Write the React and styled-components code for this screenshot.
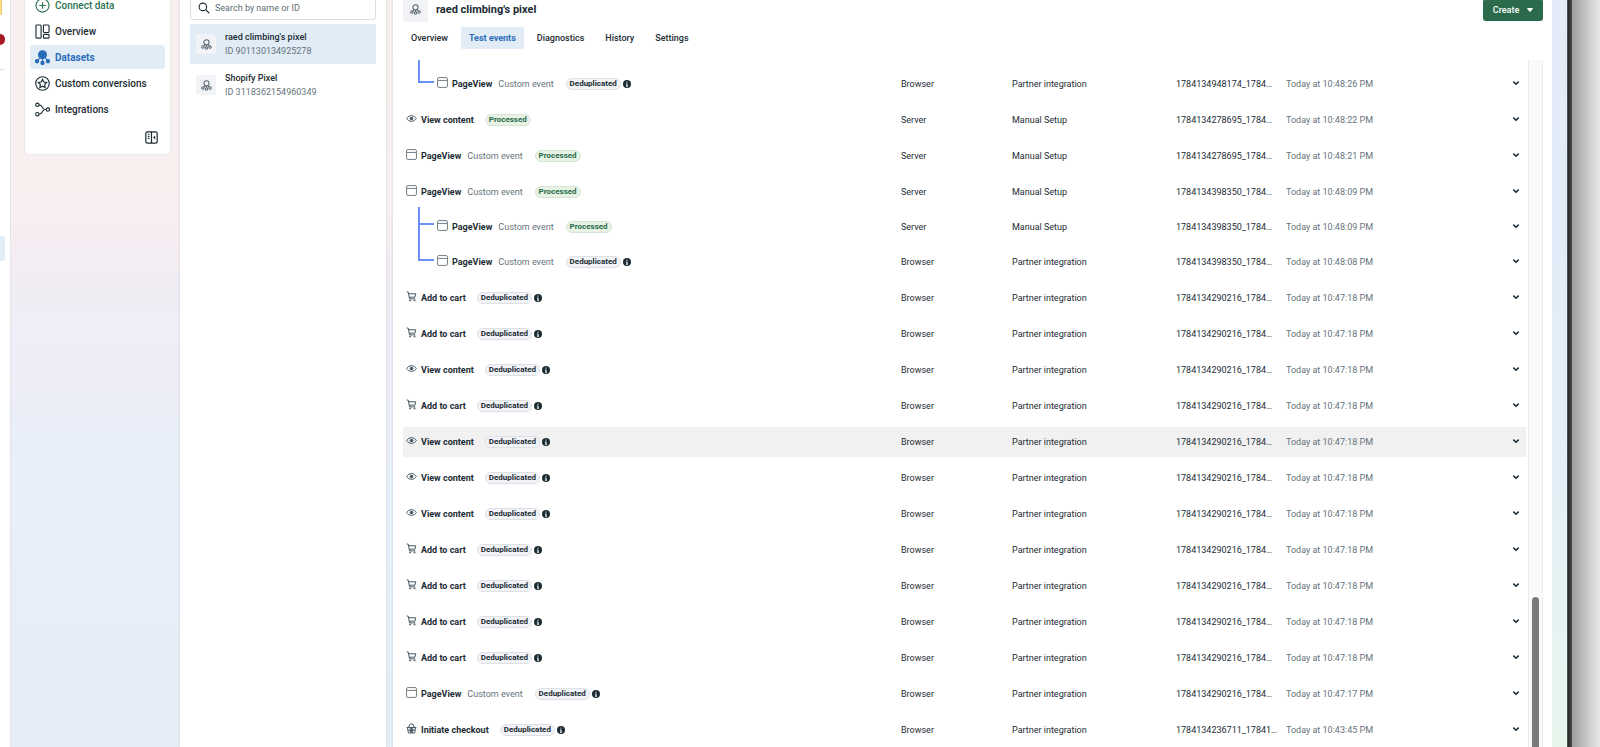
import React from "react";
import styled, { createGlobalStyle, css } from "styled-components";

const navItems = [
  { label: "Connect data", icon: "plus", accent: true },
  { label: "Overview", icon: "overview" },
  { label: "Datasets", icon: "datasets", active: true },
  { label: "Custom conversions", icon: "star" },
  { label: "Integrations", icon: "integrations" },
];

const datasets = [
  { name: "raed climbing's pixel", id: "901130134925278", active: true },
  { name: "Shopify Pixel", id: "3118362154960349" },
];

const tabs = ["Overview", "Test events", "Diagnostics", "History", "Settings"];

const page = { name: "PageView", icon: "window", custom: true };
const view = { name: "View content", icon: "eye" };
const cart = { name: "Add to cart", icon: "cart" };
const checkout = { name: "Initiate checkout", icon: "basket" };
const server = { source: "Server", setup: "Manual Setup", processed: true };
const browser = { source: "Browser", setup: "Partner integration" };
const batch = { ...browser, id: "1784134290216_1784…", time: "10:47:18 PM" };

const events = [
  { ...page, ...browser, id: "1784134948174_1784…", time: "10:48:26 PM", nested: "last" },
  { ...view, ...server, id: "1784134278695_1784…", time: "10:48:22 PM" },
  { ...page, ...server, id: "1784134278695_1784…", time: "10:48:21 PM" },
  { ...page, ...server, id: "1784134398350_1784…", time: "10:48:09 PM" },
  { ...page, ...server, id: "1784134398350_1784…", time: "10:48:09 PM", nested: "first" },
  { ...page, ...browser, id: "1784134398350_1784…", time: "10:48:08 PM", nested: "last" },
  { ...cart, ...batch },
  { ...cart, ...batch },
  { ...view, ...batch },
  { ...cart, ...batch },
  { ...view, ...batch, highlighted: true },
  { ...view, ...batch },
  { ...view, ...batch },
  { ...cart, ...batch },
  { ...cart, ...batch },
  { ...cart, ...batch },
  { ...cart, ...batch },
  { ...page, ...batch, time: "10:47:17 PM" },
  { ...checkout, ...browser, id: "1784134236711_17841…", time: "10:43:45 PM" },
];

const shapes = {
  plus: (
    <>
      <circle cx="8" cy="8" r="7" />
      <path d="M8 4.5v7M4.5 8h7" />
    </>
  ),
  overview: (
    <>
      <rect x="1" y="1" width="5.5" height="14" rx="1" />
      <rect x="9" y="1" width="6" height="8" rx="1" />
      <rect x="9" y="11" width="6" height="4" rx="1" />
    </>
  ),
  datasets: (
    <g fill="currentColor">
      <circle cx="8" cy="5" r="4.2" />
      <circle cx="2.2" cy="12" r="1.7" />
      <circle cx="8" cy="13.8" r="1.7" />
      <circle cx="13.8" cy="12" r="1.7" />
      <path d="M5.5 8 2.5 11.5M8 9v4M10.5 8l3 3.5" />
    </g>
  ),
  star: (
    <>
      <circle cx="8" cy="8" r="7.2" />
      <path d="m8 3.6 1.4 2.8 3.1.5-2.2 2.2.5 3.1L8 10.8l-2.8 1.4.5-3.1-2.2-2.2 3.1-.5z" />
    </>
  ),
  integrations: (
    <>
      <circle cx="2.5" cy="3" r="1.8" />
      <circle cx="2.5" cy="13" r="1.8" />
      <circle cx="13.7" cy="8" r="1.8" />
      <path d="M4.3 3c4 0 3.5 5 6 5h1.6M4.3 13c4 0 3.5-5 6-5" />
    </>
  ),
  collapse: (
    <>
      <rect x="1" y="1" width="14" height="14" rx="2" />
      <path d="M8 1v14M3.5 4h2M3.5 6.5h2M3.5 9h2" />
      <path d="M12.5 5.5v5L10 8z" fill="currentColor" stroke="none" />
    </>
  ),
  search: (
    <>
      <circle cx="6.5" cy="6.5" r="5" />
      <path d="m10.3 10.3 4.7 4.7" />
    </>
  ),
  pixel: (
    <>
      <circle cx="8" cy="4.8" r="3.8" />
      <circle cx="2.8" cy="11.5" r="1.8" />
      <circle cx="8" cy="13" r="1.8" />
      <circle cx="13.2" cy="11.5" r="1.8" />
      <path d="M6 8.2 4.2 10.2M8 8.6v2.6M10 8.2l1.8 2" />
    </>
  ),
  window: (
    <>
      <rect x="0.8" y="0.8" width="14.4" height="14.4" rx="2" />
      <path d="M1 5h14" />
    </>
  ),
  eye: (
    <>
      <path d="M1 8c3.5-5.6 10.5-5.6 14 0-3.5 5.6-10.5 5.6-14 0z" />
      <circle cx="8" cy="8" r="2" fill="currentColor" />
    </>
  ),
  cart: (
    <>
      <path d="M1 1.5h2.2l2 10h8.5M3.7 4h10.5l-1.200 5H4.8" />
      <circle cx="6" cy="13.800" r="0.800" />
      <circle cx="12.5" cy="13.800" r="0.800" />
    </>
  ),
  basket: (
    <path d="M1 6.5h14M2 6.5l1.5 8h9l1.5-8M3.5 6.5 6 1.5h4l2.5 5M6 7l.5 7M10 7l-.5 7M2.8 10.5h10.4M8 7v7" />
  ),
};

function Icon({ name, size, weight = 1.5 }) {
  return (
    <Glyph $size={size} $weight={weight} viewBox="0 0 16 16" aria-hidden="true">
      {shapes[name]}
    </Glyph>
  );
}

function EventRow({ event }) {
  return (
    <Row $nested={event.nested} $highlighted={event.highlighted}>
      <NameCell $nested={event.nested}>
        <EventName>
          <EventIcon $light={event.icon === "window"}>
            <Icon name={event.icon} size={11} weight={1.4} />
          </EventIcon>
          <strong>{event.name}</strong>
          {event.custom && <Muted>Custom event</Muted>}
          <Status $processed={event.processed}>
            {event.processed ? "Processed" : "Deduplicated"}
          </Status>
          {!event.processed && (
            <Info viewBox="0 0 8 8" role="img" aria-label="Info">
              <circle cx="4" cy="4" r="4" fill="#1c2b33" />
              <path d="M4 1.6v1M3.2 3.8H4v2.2M3 6.2h2" stroke="#ffffff" strokeWidth="1" fill="none" />
            </Info>
          )}
        </EventName>
      </NameCell>
      <Cell>{event.source}</Cell>
      <Cell>{event.setup}</Cell>
      <Cell>{event.id}</Cell>
      <Cell>
        <Muted>Today at {event.time}</Muted>
      </Cell>
      <Cell>
        <Expand type="button" aria-label="Show details">
          <svg width="8" height="8" viewBox="0 0 8 8" fill="none" stroke="#1c2b33" strokeWidth="1.5">
            <path d="m1.3 2.6 2.7 2.6 2.7-2.6" />
          </svg>
        </Expand>
      </Cell>
    </Row>
  );
}

function App() {
  return (
    <Screen>
      <GlobalStyle />
      <Rail>
        <RailAvatar />
        <RailBadge />
        <RailDivider />
        <RailSelected />
      </Rail>
      <Sidebar>
        <NavCard>
          {navItems.map((item) => (
            <NavLink key={item.label} href="#" $active={item.active} $accent={item.accent}>
              <Icon name={item.icon} size={15} weight={1.2} />
              {item.label}
            </NavLink>
          ))}
          <Collapse type="button" aria-label="Collapse menu">
            <Icon name="collapse" size={13} />
          </Collapse>
        </NavCard>
      </Sidebar>
      <DatasetPanel>
        <SearchBox>
          <Icon name="search" size={12} />
          <SearchInput type="text" aria-label="Search by name or ID" placeholder="Search by name or ID" />
        </SearchBox>
        {datasets.map((item) => (
          <Dataset key={item.id} href="#" $active={item.active}>
            <PixelTile $size="20px">
              <Icon name="pixel" size={11} />
            </PixelTile>
            <DatasetText>
              <span>{item.name}</span>
              <Muted>ID {item.id}</Muted>
            </DatasetText>
          </Dataset>
        ))}
      </DatasetPanel>
      <Main>
        <Header>
          <PixelTile $size="25px">
            <Icon name="pixel" size={11} />
          </PixelTile>
          <Title>raed climbing's pixel</Title>
          <CreateButton type="button">
            Create
            <svg width="6" height="4" viewBox="0 0 6 4" fill="#ffffff">
              <path d="M.5 0h5q.5.2.3.7L3.4 3.7q-.4.3-.8 0L.2.7Q0 .2.5 0z" />
            </svg>
          </CreateButton>
        </Header>
        <Tabs role="tablist">
          {tabs.map((tab) => (
            <Tab key={tab} type="button" role="tab" aria-selected={tab === "Test events"} $active={tab === "Test events"}>
              {tab}
            </Tab>
          ))}
        </Tabs>
        <Scroller>
          <TableWrap>
            <Table>
              <colgroup>
                <col />
                <Column $width="111px" />
                <Column $width="164px" />
                <Column $width="110px" />
                <Column $width="220px" />
                <Column $width="20px" />
              </colgroup>
              <tbody>
                {events.map((event, index) => (
                  <EventRow key={index} event={event} />
                ))}
              </tbody>
            </Table>
          </TableWrap>
          <Track>
            <Thumb />
          </Track>
        </Scroller>
      </Main>
      <RightGutter />
      <WindowEdge />
      <Backdrop />
    </Screen>
  );
}

export default App;

const GlobalStyle = createGlobalStyle`
  * {
    box-sizing: border-box;
  }

  body {
    margin: 0;
    overflow: hidden;
    font-family: Roboto, sans-serif;
    font-size: 9px;
    line-height: 14px;
    color: #1c2b33;
  }

  button,
  input {
    font: inherit;
    color: inherit;
    border: none;
    outline: none;
    background: transparent;
    margin: 0;
    padding: 0;
  }

  a {
    color: inherit;
    text-decoration: none;
  }
`;

const Screen = styled.div`
  display: flex;
  height: 100vh;
  overflow: hidden;
  background: linear-gradient(180deg, #f8efef 0%, #f8f0f0 27%, #f3ecf3 35%, #efedf4 40%, #efedf8 46%, #ecedf6 53%, #e9eef8 58%, #e7f0fa 66%, #e5eef7 100%);
`;

const Glyph = styled.svg`
  flex: none;
  display: block;
  width: ${(props) => props.$size}px;
  height: ${(props) => props.$size}px;
  fill: none;
  stroke: currentColor;
  stroke-width: ${(props) => props.$weight};
`;

const Muted = styled.span`
  font-weight: 400;
  color: #65737b;
`;

const Rail = styled.aside`
  flex: none;
  width: 11px;
  background: #ffffff;
  border-right: 1px solid #e6e4e8;
  overflow: hidden;
`;

const RailAvatar = styled.div`
  width: 2px;
  height: 15px;
  background: #fbdc8c;
  border-right: 1px solid #f0cb6c;
`;

const RailBadge = styled.div`
  width: 5px;
  height: 11px;
  margin-top: 19px;
  background: #a61b23;
  border-radius: 0 6px 6px 0;
`;

const RailDivider = styled.div`
  width: 5px;
  height: 1px;
  margin-top: 24px;
  background: #dfe2e5;
`;

const RailSelected = styled.div`
  width: 5px;
  height: 25px;
  margin-top: 166px;
  background: #e1edf7;
  border-radius: 0 2px 2px 0;
`;

const Sidebar = styled.div`
  flex: none;
  width: 169px;
  margin-top: -8px;
  padding: 0 10px 0 14px;
`;

const NavCard = styled.nav`
  display: flex;
  flex-direction: column;
  gap: 2px;
  height: 162px;
  padding: 1px 5px 10px;
  background: #ffffff;
  border-radius: 3px;
  box-shadow: 0 0 2px rgba(0, 0, 0, 0.12);
`;

const NavLink = styled.a`
  display: flex;
  align-items: center;
  gap: 5px;
  height: 24px;
  padding: 1px 5px 0;
  border-radius: 3px;
  font-size: 10px;
  font-weight: 500;
  color: ${(props) => (props.$accent ? "#2b7350" : "#1c2b33")};
  ${(props) =>
    props.$active &&
    css`
      color: #2a6ebb;
      font-weight: 700;
      background: #e1ecf6;
    `}
`;

const Collapse = styled.button`
  align-self: flex-end;
  margin: auto 7px 0 0;
`;

const DatasetPanel = styled.section`
  flex: none;
  display: flex;
  flex-direction: column;
  width: 206px;
  margin-top: -8px;
  padding: 1px 10px 0;
  background: #ffffff;
  box-shadow: 0 0 2px rgba(0, 0, 0, 0.16);
`;

const SearchBox = styled.label`
  display: flex;
  align-items: center;
  gap: 5px;
  height: 27px;
  margin-bottom: 4px;
  padding: 3px 7px 0;
  border: 1px solid #dadee2;
  border-radius: 3px;
`;

const SearchInput = styled.input`
  flex: 1;
  min-width: 0;

  &::placeholder {
    color: #5d6c75;
    opacity: 1;
  }
`;

const Dataset = styled.a`
  display: flex;
  align-items: center;
  gap: 9px;
  height: 40px;
  margin-bottom: 1px;
  padding: 0 6px;
  border-radius: 2px;
  background: ${(props) => (props.$active ? "#e1ecf6" : "transparent")};
`;

const DatasetText = styled.span`
  display: flex;
  flex-direction: column;
  font-weight: 500;
`;

const PixelTile = styled.span`
  flex: none;
  display: flex;
  align-items: center;
  justify-content: center;
  width: ${(props) => props.$size};
  height: ${(props) => props.$size};
  border-radius: 2px;
  color: #55636c;
  background: #f1f3f7;
`;

const Main = styled.main`
  flex: 1;
  min-width: 0;
  display: flex;
  flex-direction: column;
  margin: -8px 0 0 7px;
  padding: 5px 9px 0 10px;
  background: #ffffff;
  box-shadow: 0 0 2px rgba(60, 90, 150, 0.25);
`;

const Header = styled.header`
  display: flex;
  align-items: center;
  gap: 8px;
  height: 25px;
`;

const Title = styled.h1`
  margin: 0;
  font-size: 11px;
  line-height: 14px;
  font-weight: 700;
`;

const CreateButton = styled.button`
  display: flex;
  align-items: center;
  justify-content: center;
  gap: 8px;
  width: 60px;
  height: 22px;
  margin-left: auto;
  border-radius: 3px;
  font-weight: 500;
  color: #ffffff;
  background: #2b6b4b;
`;

const Tabs = styled.div`
  display: flex;
  gap: 5px;
  margin: 5px 0 11px;
`;

const Tab = styled.button`
  height: 22px;
  padding: 0 8px;
  border-radius: 2px;
  font-weight: 500;
  ${(props) =>
    props.$active &&
    css`
      font-weight: 700;
      color: #2a6ebb;
      background: #e1ecf6;
    `}
`;

const Scroller = styled.div`
  flex: 1;
  min-height: 0;
  display: flex;
  gap: 2px;
  overflow: hidden;
`;

const TableWrap = styled.div`
  flex: 1;
  min-width: 0;
  padding-top: 3px;
`;

const Table = styled.table`
  width: 100%;
  table-layout: fixed;
  border-collapse: separate;
  border-spacing: 0 6px;
`;

const Column = styled.col`
  width: ${(props) => props.$width};
`;

const Row = styled.tr`
  height: ${(props) => (props.$nested === "first" ? "28px" : "30px")};
  background: ${(props) => (props.$highlighted ? "#f1f1f1" : "transparent")};
`;

const Cell = styled.td`
  padding: 0;
  white-space: nowrap;
`;

// nested rows hang off their parent by a blue branch
const NameCell = styled(Cell)`
  position: relative;
  padding-left: ${(props) => (props.$nested ? "34px" : "3px")};

  ${(props) =>
    props.$nested &&
    css`
      &::before {
        content: "";
        position: absolute;
        left: 15px;
        bottom: 16px;
        width: 14px;
        height: ${props.$nested === "first" ? "16px" : "36px"};
        border: solid #6c8ff9;
        border-width: 0 0 2px 2px;
      }
    `}
`;

const EventName = styled.div`
  display: flex;
  align-items: center;

  strong {
    font-weight: 700;
  }

  ${Muted} {
    margin: 0 1px 0 6px;
  }
`;

const EventIcon = styled.span`
  margin: 0 4px 3px 0;
  color: ${(props) => (props.$light ? "#717b82" : "#45545e")};
`;

const Status = styled.span`
  margin-left: 11px;
  padding: 0 3px;
  border: 1px solid ${(props) => (props.$processed ? "#d3e6d3" : "#dde1e6")};
  border-radius: 6px;
  font-size: 8px;
  line-height: 10px;
  font-weight: 700;
  color: ${(props) => (props.$processed ? "#276b49" : "#1c2b33")};
  background: ${(props) => (props.$processed ? "#e8f3e6" : "#f1f3f6")};
`;

const Info = styled.svg`
  width: 8px;
  height: 8px;
  margin-left: 2px;
`;

const Expand = styled.button`
  display: block;
  margin-left: 6px;
`;

const Track = styled.div`
  flex: none;
  width: 15px;
  padding: 537px 3px 0;
  background: #fafafa;
  border: 1px solid #ececec;
  border-width: 0 1px;
`;

const Thumb = styled.div`
  height: 100%;
  min-height: 200px;
  border-radius: 4px 4px 0 0;
  background: #7a7a7a;
`;

const RightGutter = styled.div`
  flex: none;
  width: 15px;
  background: linear-gradient(180deg, #e5ebf8 0%, #e1ecf8 30%, #e3eff6 65%, #e8f6ee 100%);
`;

const WindowEdge = styled.div`
  flex: none;
  width: 5px;
  background: linear-gradient(90deg, #5d6266 0%, #2c2c2c 30%, #3a3a3a 70%, #505050 100%);
`;

const Backdrop = styled.div`
  flex: none;
  width: 28px;
  background: linear-gradient(90deg, #9d9d9d 0%, #b8b8b8 35%, #d4d4d4 70%, #e6e6e6 100%);
`;
